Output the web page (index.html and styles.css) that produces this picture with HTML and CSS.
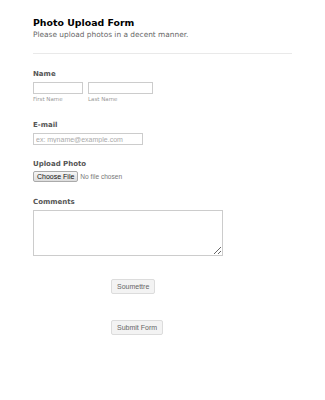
FILE: index.html
```html
<!DOCTYPE html>
<html>
<head>
  <meta charset="utf-8">
  <title>Photo Upload Form</title>
  <link rel="stylesheet" href="styles.css">
</head>
<body>
  <form class="form">
    <div class="header">
      <h1>Photo Upload Form</h1>
      <p class="subtitle">Please upload photos in a decent manner.</p>
    </div>
    <div class="field field-name">
      <label class="label">Name</label>
      <div class="name-row">
        <div class="name-part">
          <input type="text" class="input input-first">
          <span class="sublabel">First Name</span>
        </div>
        <div class="name-part">
          <input type="text" class="input input-last">
          <span class="sublabel">Last Name</span>
        </div>
      </div>
    </div>
    <div class="field field-email">
      <label class="label">E-mail</label>
      <input type="email" class="input input-email" placeholder="ex: myname@example.com">
    </div>
    <div class="field field-file">
      <label class="label label-file">Upload Photo</label>
      <input type="file" class="file">
    </div>
    <div class="field">
      <label class="label">Comments</label>
      <textarea class="comments"></textarea>
    </div>
    <div class="actions">
      <button type="button" class="button">Soumettre</button>
      <button type="submit" class="button button-submit">Submit Form</button>
    </div>
  </form>
</body>
</html>
```

FILE: styles.css
```css
* {
  margin: 0;
  padding: 0;
  box-sizing: border-box;
}
body {
  font-family: "DejaVu Sans", Verdana, sans-serif;
  background: #fff;
  color: #555;
}
.form {
  padding: 17px 33px 0;
}
.header {
  padding-bottom: 13px;
  border-bottom: 1px solid #e9e9e9;
  margin-bottom: 16px;
}
.header h1 {
  font-size: 9.4px;
  line-height: 12px;
  font-weight: bold;
  color: #000;
}
.subtitle {
  font-size: 7.4px;
  line-height: 10px;
  color: #666;
  margin-top: 1px;
}
.field {
  margin-bottom: 18px;
}
.field-email {
  margin-bottom: 15px;
}
.field-file {
  margin-bottom: 16px;
}
.label {
  display: block;
  font-size: 7px;
  line-height: 9px;
  font-weight: bold;
  color: #555;
  margin-bottom: 3px;
}
.label-file {
  margin-bottom: 2px;
}
.name-row {
  display: flex;
  gap: 5px;
}
.name-part {
  display: flex;
  flex-direction: column;
}
.input {
  display: block;
  height: 12px;
  border: 1px solid #ccc;
  background: #fff;
  outline: none;
  font-family: "Liberation Sans", Arial, sans-serif;
  font-size: 7px;
  padding: 0 2px;
}
.input-first {
  width: 50px;
}
.input-last {
  width: 65px;
}
.input-email {
  width: 110px;
}
.input-email::placeholder {
  color: #aaa;
}
.sublabel {
  font-size: 5.5px;
  line-height: 8px;
  color: #999;
  margin-top: 1px;
}
.file {
  display: block;
  font-family: "Liberation Sans", Arial, sans-serif;
  font-size: 6.6px;
  color: #777;
}
.file::file-selector-button {
  font-family: "Liberation Sans", Arial, sans-serif;
  font-size: 7px;
  height: 11px;
  padding: 0 3px;
  margin-right: 2px;
  border: 1px solid #aaa;
  border-radius: 2px;
  background: linear-gradient(#f6f6f6, #dddddd);
  color: #111;
}
.comments {
  display: block;
  width: 190px;
  height: 46px;
  border: 1px solid #ccc;
  resize: both;
  outline: none;
}
.actions {
  display: flex;
  flex-direction: column;
  align-items: flex-start;
  gap: 26px;
  padding: 5px 0 0 78px;
}
.button {
  font-family: "Liberation Sans", Arial, sans-serif;
  font-size: 7px;
  color: #666;
  height: 15px;
  padding: 0 5px;
  background: #f3f3f3;
  border: 1px solid #dcdcdc;
  border-radius: 2px;
}
```
